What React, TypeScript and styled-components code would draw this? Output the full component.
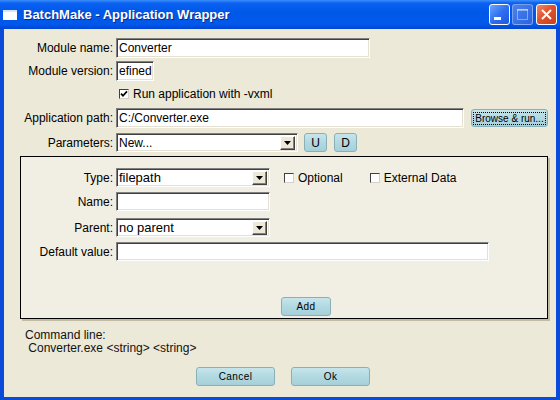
import React from 'react';
import styled, { createGlobalStyle } from 'styled-components';

const GlobalStyle = createGlobalStyle`
  html, body {
    margin: 0;
    padding: 0;
  }
  body {
    font-family: 'Liberation Sans', Arial, sans-serif;
    font-size: 12px;
    color: #000;
  }
`;

const Window = styled.div`
  width: 560px;
  height: 400px;
  display: flex;
  flex-direction: column;
  background: #0A4CD9;
  box-sizing: border-box;
`;

const TitleBar = styled.div`
  height: 29px;
  flex-shrink: 0;
  display: flex;
  align-items: center;
  padding: 0 3px 0 3px;
  background: linear-gradient(
    to bottom,
    #3d8ff9 0px,
    #0b62f2 3px,
    #0058e8 12px,
    #0059ec 24px,
    #0045d2 29px
  );
`;

const TitleIcon = styled.div`
  width: 14px;
  height: 10px;
  margin-top: 1px;
  background: #fff;
  border-top: 2px solid #d8e4f8;
  box-sizing: border-box;
`;

const TitleText = styled.div`
  margin-left: 6px;
  color: #fff;
  font-family: 'Liberation Sans', Arial, sans-serif;
  font-weight: bold;
  font-size: 13px;
  text-shadow: 1px 1px 0 #0a2a8a;
`;

const WinButtons = styled.div`
  margin-left: auto;
  display: flex;
  gap: 2px;
`;

const WinButton = styled.div<{ $kind: 'min' | 'max' | 'close' }>`
  width: 21px;
  height: 21px;
  box-sizing: border-box;
  border-radius: 3px;
  display: flex;
  align-items: center;
  justify-content: center;
  border: 1px solid
    ${({ $kind }) => ($kind === 'max' ? 'rgba(255,255,255,0.35)' : '#fff')};
  background: ${({ $kind }) =>
    $kind === 'close'
      ? 'linear-gradient(135deg, #f0886a 0%, #e0532d 45%, #c9401e 100%)'
      : $kind === 'max'
        ? 'linear-gradient(135deg, #4a83ee 0%, #2a63e0 100%)'
        : 'linear-gradient(135deg, #6aa6ff 0%, #2f6ff0 50%, #1d57e0 100%)'};
  margin-left: ${({ $kind }) => ($kind === 'close' ? '1px' : '0')};
`;

const Frame = styled.div`
  flex: 1;
  display: flex;
  padding: 0 4px 3px 4px;
  min-height: 0;
`;

const Content = styled.div`
  flex: 1;
  background: #ece9d8;
  display: flex;
  flex-direction: column;
  padding-top: 9px;
  box-sizing: border-box;
`;

const Row = styled.div<{ $mt?: number; $h?: number; $pl?: number }>`
  display: flex;
  align-items: center;
  gap: 3px;
  height: ${({ $h }) => $h ?? 20}px;
  margin-top: ${({ $mt }) => $mt ?? 0}px;
  padding-left: ${({ $pl }) => $pl ?? 0}px;
  flex-shrink: 0;
`;

const Label = styled.div<{ $w: number }>`
  width: ${({ $w }) => $w}px;
  flex-shrink: 0;
  text-align: right;
  white-space: nowrap;
`;

const TextBox = styled.div<{ $w: number; $h?: number; $fs?: number }>`
  width: ${({ $w }) => $w}px;
  height: ${({ $h }) => $h ?? 20}px;
  box-sizing: border-box;
  background: #fff;
  border: 1px solid;
  border-color: #808080 #fff #fff #808080;
  box-shadow: inset 1px 1px 0 #404040, inset -1px -1px 0 #e4e1d4;
  padding-left: 2px;
  display: flex;
  align-items: center;
  overflow: hidden;
  white-space: nowrap;
  flex-shrink: 0;
  font-size: ${({ $fs }) => $fs ?? 12}px;
`;

const SelectBox = styled(TextBox)`
  justify-content: space-between;
  padding-right: 2px;
`;

const ArrowButton = styled.div`
  width: 15px;
  height: 14px;
  box-sizing: border-box;
  background: #ece9d8;
  border: 1px solid;
  border-color: #fff #404040 #404040 #fff;
  box-shadow: inset -1px -1px 0 #808080;
  display: flex;
  align-items: center;
  justify-content: center;
`;

const CheckWrap = styled.div<{ $ml?: number }>`
  display: flex;
  align-items: center;
  gap: 4px;
  margin-left: ${({ $ml }) => $ml ?? 0}px;
  white-space: nowrap;
`;

const CheckBoxSquare = styled.div`
  width: 10px;
  height: 10px;
  box-sizing: border-box;
  background: #fff;
  border: 1px solid;
  border-color: #404040 #d4d0c8 #d4d0c8 #404040;
  display: flex;
  align-items: center;
  justify-content: center;
`;

const Button = styled.div<{ $w: number; $h?: number; $fs?: number; $ml?: number }>`
  width: ${({ $w }) => $w}px;
  height: ${({ $h }) => $h ?? 19}px;
  margin-left: ${({ $ml }) => $ml ?? 0}px;
  box-sizing: border-box;
  border: 1px solid #88b0b9;
  border-radius: 3px;
  background: linear-gradient(to bottom, #c6e5eb 0%, #b2d9e1 50%, #a6d0d9 100%);
  display: flex;
  align-items: center;
  justify-content: center;
  font-family: 'Liberation Sans', Arial, sans-serif;
  font-size: ${({ $fs }) => $fs ?? 10}px;
  letter-spacing: ${({ $fs }) => ($fs && $fs > 10 ? 0 : 0.4)}px;
  color: #000;
  flex-shrink: 0;
`;

const FocusText = styled.span`
  border: 1px dotted #000;
  padding: 0 1px;
  line-height: 11px;
  letter-spacing: 0;
`;

const Panel = styled.div`
  margin: 4px 0 0 16px;
  width: 528px;
  height: 163px;
  box-sizing: border-box;
  border: 1px solid #000;
  box-shadow: 2px 2px 0 #c2bca4;
  background: #f1efe3;
  display: flex;
  flex-direction: column;
  padding: 11px 0 2px 0;
  flex-shrink: 0;
`;

const PanelFooter = styled.div`
  margin-top: auto;
  padding-left: 260px;
  display: flex;
`;

const CommandBlock = styled.div`
  margin-top: 10px;
  padding-left: 21px;
  line-height: 13px;
  color: #111;
  white-space: pre;
`;

const Footer = styled.div`
  margin-top: 12px;
  display: flex;
  justify-content: center;
  gap: 16px;
  padding-left: 6px;
`;

const Check = () => (
  <svg width="8" height="8" viewBox="0 0 8 8">
    <path d="M1 3.6 L3 5.8 L7 1.4" fill="none" stroke="#000" strokeWidth="1.7" />
  </svg>
);

const Arrow = () => (
  <svg width="7" height="4" viewBox="0 0 7 4">
    <polygon points="0,0 7,0 3.5,4" fill="#000" />
  </svg>
);

const Select = ({ w, h, fs, value }: { w: number; h?: number; fs?: number; value: string }) => (
  <SelectBox $w={w} $h={h} $fs={fs}>
    <span>{value}</span>
    <ArrowButton>
      <Arrow />
    </ArrowButton>
  </SelectBox>
);

const CheckField = ({ checked, label, ml }: { checked?: boolean; label: string; ml?: number }) => (
  <CheckWrap $ml={ml}>
    <CheckBoxSquare>{checked && <Check />}</CheckBoxSquare>
    <span>{label}</span>
  </CheckWrap>
);

export default function App() {
  return (
    <>
      <GlobalStyle />
      <Window>
        <TitleBar>
          <TitleIcon />
          <TitleText>BatchMake - Application Wrapper</TitleText>
          <WinButtons>
            <WinButton $kind="min">
              <svg width="19" height="19" viewBox="0 0 19 19">
                <rect x="4" y="12" width="7" height="3" fill="#fff" />
              </svg>
            </WinButton>
            <WinButton $kind="max">
              <svg width="19" height="19" viewBox="0 0 19 19">
                <rect x="4.5" y="4.5" width="10" height="10" fill="none" stroke="rgba(255,255,255,0.4)" />
                <rect x="4" y="4" width="11" height="2" fill="rgba(255,255,255,0.4)" />
              </svg>
            </WinButton>
            <WinButton $kind="close">
              <svg width="19" height="19" viewBox="0 0 19 19">
                <path d="M5 5 L14 14 M14 5 L5 14" stroke="#fff" strokeWidth="2" />
              </svg>
            </WinButton>
          </WinButtons>
        </TitleBar>
        <Frame>
          <Content>
            <Row>
              <Label $w={109}>Module name:</Label>
              <TextBox $w={254}>Converter</TextBox>
            </Row>
            <Row $mt={3}>
              <Label $w={109}>Module version:</Label>
              <TextBox $w={38}>efined</TextBox>
            </Row>
            <Row $mt={3} $pl={115}>
              <CheckField checked label="Run application with -vxml" />
            </Row>
            <Row $mt={4}>
              <Label $w={109}>Application path:</Label>
              <TextBox $w={348}>C:/Converter.exe</TextBox>
              <Button $w={77} $h={18} $ml={4}>
                <FocusText>Browse &amp; run...</FocusText>
              </Button>
            </Row>
            <Row $mt={5} $h={19}>
              <Label $w={109}>Parameters:</Label>
              <Select w={182} h={19} value="New..." />
              <Button $w={23} $fs={12} $ml={3}>U</Button>
              <Button $w={23} $fs={12} $ml={4}>D</Button>
            </Row>
            <Panel>
              <Row $h={19}>
                <Label $w={92}>Type:</Label>
                <Select w={154} h={19} fs={13} value="filepath" />
                <CheckField label="Optional" ml={11} />
                <CheckField label="External Data" ml={24} />
              </Row>
              <Row $mt={5} $h={19}>
                <Label $w={92}>Name:</Label>
                <TextBox $w={154} $h={19} />
              </Row>
              <Row $mt={7} $h={19}>
                <Label $w={92}>Parent:</Label>
                <Select w={154} h={19} fs={13} value="no parent" />
              </Row>
              <Row $mt={5} $h={19}>
                <Label $w={92}>Default value:</Label>
                <TextBox $w={373} $h={19} />
              </Row>
              <PanelFooter>
                <Button $w={50}>Add</Button>
              </PanelFooter>
            </Panel>
            <CommandBlock>
              {'Command line:\n Converter.exe <string> <string>'}
            </CommandBlock>
            <Footer>
              <Button $w={79}>Cancel</Button>
              <Button $w={79}>Ok</Button>
            </Footer>
          </Content>
        </Frame>
      </Window>
    </>
  );
}
